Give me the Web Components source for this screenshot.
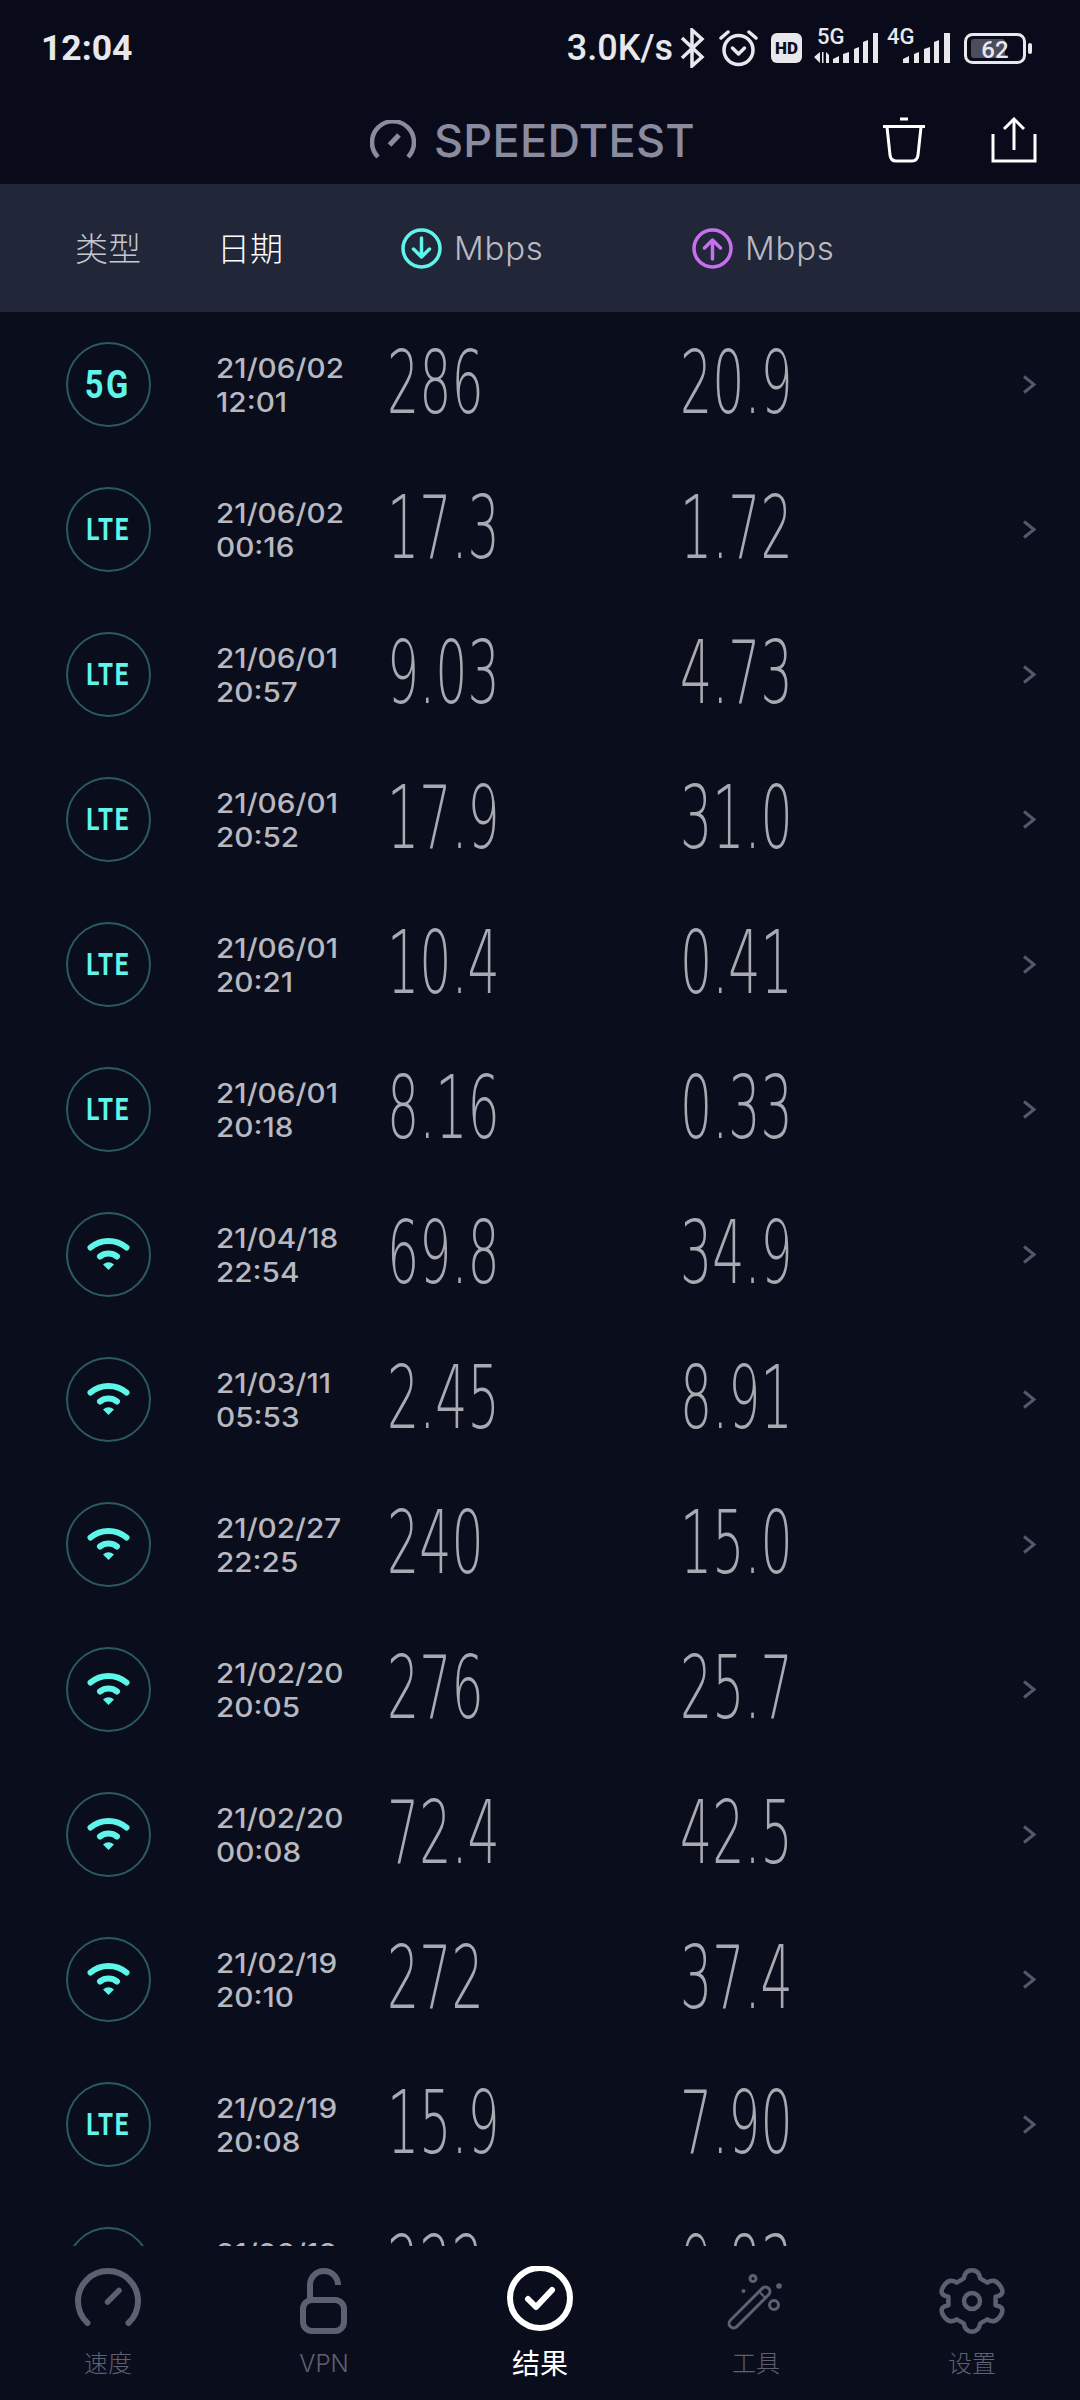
<!DOCTYPE html>
<html lang="zh">
<head>
<meta charset="utf-8">
<title>Speedtest</title>
<style>
  html, body { margin: 0; padding: 0; background: #0a0d1b; }
  body { width: 1080px; height: 2400px; overflow: hidden; font-family: "Inter", "Noto Sans CJK SC", sans-serif; }
</style>
</head>
<body>
<st-app>
  <st-status slot="status"></st-status>
  <st-title slot="title"></st-title>
  <st-head slot="head"></st-head>

  <st-row type="5g"><span slot="date">21/06/02</span><span slot="time">12:01</span><span slot="down">286</span><span slot="up">20.9</span></st-row>
  <st-row type="lte"><span slot="date">21/06/02</span><span slot="time">00:16</span><span slot="down">17.3</span><span slot="up">1.72</span></st-row>
  <st-row type="lte"><span slot="date">21/06/01</span><span slot="time">20:57</span><span slot="down">9.03</span><span slot="up">4.73</span></st-row>
  <st-row type="lte"><span slot="date">21/06/01</span><span slot="time">20:52</span><span slot="down">17.9</span><span slot="up">31.0</span></st-row>
  <st-row type="lte"><span slot="date">21/06/01</span><span slot="time">20:21</span><span slot="down">10.4</span><span slot="up">0.41</span></st-row>
  <st-row type="lte"><span slot="date">21/06/01</span><span slot="time">20:18</span><span slot="down">8.16</span><span slot="up">0.33</span></st-row>
  <st-row type="wifi"><span slot="date">21/04/18</span><span slot="time">22:54</span><span slot="down">69.8</span><span slot="up">34.9</span></st-row>
  <st-row type="wifi"><span slot="date">21/03/11</span><span slot="time">05:53</span><span slot="down">2.45</span><span slot="up">8.91</span></st-row>
  <st-row type="wifi"><span slot="date">21/02/27</span><span slot="time">22:25</span><span slot="down">240</span><span slot="up">15.0</span></st-row>
  <st-row type="wifi"><span slot="date">21/02/20</span><span slot="time">20:05</span><span slot="down">276</span><span slot="up">25.7</span></st-row>
  <st-row type="wifi"><span slot="date">21/02/20</span><span slot="time">00:08</span><span slot="down">72.4</span><span slot="up">42.5</span></st-row>
  <st-row type="wifi"><span slot="date">21/02/19</span><span slot="time">20:10</span><span slot="down">272</span><span slot="up">37.4</span></st-row>
  <st-row type="lte"><span slot="date">21/02/19</span><span slot="time">20:08</span><span slot="down">15.9</span><span slot="up">7.90</span></st-row>
  <st-row type="lte"><span slot="date">21/02/19</span><span slot="time">20:06</span><span slot="down">222</span><span slot="up">9.83</span></st-row>

  <st-tabs slot="tabs">
    <st-tab>
      <svg slot="icon" width="70" height="70" viewBox="0 0 70 70" fill="none" stroke="#5e6072" stroke-width="6" stroke-linecap="round"><path d="M14.500 57A30 30 0 1 1 55.500 57"/><path d="M34.500 36L46 24.500" stroke-width="5.500"/></svg>
      速度
    </st-tab>
    <st-tab>
      <svg slot="icon" width="70" height="70" viewBox="0 0 70 70" fill="none" stroke="#5e6072" stroke-width="6"><rect x="14" y="34" width="41" height="31" rx="9"/><path d="M21 34V19A14 14 0 0 1 49 19"/></svg>
      VPN
    </st-tab>
    <st-tab active>
      <svg slot="icon" width="70" height="70" viewBox="0 0 70 70" fill="none" stroke="#fff" stroke-linecap="round" stroke-linejoin="round"><circle cx="35" cy="32" r="30" stroke-width="6"/><path d="M23 33L31 41L47 24" stroke-width="6"/></svg>
      结果
    </st-tab>
    <st-tab>
      <svg slot="icon" width="70" height="70" viewBox="0 0 70 70" fill="none" stroke="#5e6072" stroke-width="3"><rect x="-4.500" y="-27" width="9" height="54" rx="4.500" transform="translate(28.500 41.500) rotate(45)"/><path d="M38 25.500L44 31.500" stroke-width="2"/><circle cx="32" cy="12.500" r="3"/><circle cx="53" cy="39" r="4.500"/><circle cx="58" cy="20" r="2.800" fill="#5e6072" stroke="none"/><circle cx="22.500" cy="25" r="2" fill="#5e6072" stroke="none"/></svg>
      工具
    </st-tab>
    <st-tab>
      <svg slot="icon" width="70" height="70" viewBox="0 0 70 70" fill="none" stroke="#5e6072" stroke-width="4.500" stroke-linejoin="round"><path d="M26.800 12.400Q28.100 4.300 35 4.300Q41.900 4.300 43.200 12.400L50.400 16.600Q58 11.500 63.500 20.250Q69 29 58.600 30.800V39.200Q69 41 63.500 49.750Q58 58.500 50.400 53.400L43.200 57.400Q41.900 65.700 35 65.700Q28.100 65.700 26.800 57.400L19.600 53.400Q12 58.500 6.500 49.750Q1 41 11.400 39.200V30.800Q1 29 6.500 20.250Q12 11.500 19.600 16.600Z"/><circle cx="35" cy="35" r="8"/></svg>
      设置
    </st-tab>
  </st-tabs>
</st-app>

<script>
class StApp extends HTMLElement {
  constructor() {
    super();
    this.attachShadow({ mode: "open" });
    this.shadowRoot.innerHTML = `
      <style>
        :host { display: flex; flex-direction: column; width: 1080px; height: 2400px; background: #0a0d1b; }
        .top { flex: none; background: #090b1a; }
        .list { flex: 1; min-height: 0; overflow: hidden; }
        .tabs { flex: none; }
      </style>
      <div class="top">
        <slot name="status"></slot>
        <slot name="title"></slot>
        <slot name="head"></slot>
      </div>
      <div class="list"><slot></slot></div>
      <div class="tabs"><slot name="tabs"></slot></div>
    `;
  }
}

class StStatus extends HTMLElement {
  constructor() {
    super();
    this.attachShadow({ mode: "open" });
    this.shadowRoot.innerHTML = `
      <style>
        :host { display: flex; align-items: center; height: 96px; padding: 0 48px 0 41px; box-sizing: border-box;
                color: #e8e8ec; font: 500 36px "Roboto", sans-serif; }
        .time { flex: 1; font-weight: 700; font-size: 35.500px; }
        .icons { display: flex; align-items: center; }
        svg { display: block; }
        svg text { font-family: "Roboto", sans-serif; font-weight: 500; fill: #e8e8ec; }
        .sig { margin-bottom: 12px; }
      </style>
      <span class="time">12:04</span>
      <div class="icons">
        <span>3.0K/s</span>
        <svg style="margin-left:7px" width="25" height="40" viewBox="0 0 25 40" fill="none" stroke="#e8e8ec" stroke-width="3.500"><path d="M2 10L22 29L12 38V2L22 11L2 30"/></svg>
        <svg style="margin-left:14px" width="39" height="38" viewBox="0 0 39 38" fill="none" stroke="#e8e8ec" stroke-width="3.500" stroke-linecap="round" stroke-linejoin="round"><circle cx="19.500" cy="21" r="14.500"/><path d="M13.500 19L19.500 25L25.500 19"/><path d="M2 9L9 3M37 9L30 3"/></svg>
        <svg style="margin-left:13px" width="31" height="30" viewBox="0 0 31 30"><rect width="31" height="30" rx="6" fill="#e8e8ec"/><text x="15.500" y="21" text-anchor="middle" font-size="17" style="fill:#0a0d1b;font-weight:900">HD</text></svg>
        <svg class="sig" style="margin-left:11px" width="66" height="42" viewBox="0 -6 66 42" fill="#e8e8ec"><text x="4" y="17" font-size="22">5G</text><path d="M1 30L7 25V36ZM9 25H10.500V36H9ZM13 25L16 28V36H13Z"/><path d="M20 36V32L26 29V36ZM30 36V27L36 25V36ZM41 36V22L46 20V36ZM50 36V15L55 13V36ZM60 36V6H65V36Z"/></svg>
        <svg class="sig" style="margin-left:8px" width="63" height="42" viewBox="0 -6 63 42" fill="#e8e8ec"><text x="0" y="17" font-size="22">4G</text><path d="M16 36V32L22 29V36ZM27 36V27L32 25V36ZM37 36V22L43 20V36ZM47 36V15L52 13V36ZM57 36V6H63V36Z"/></svg>
        <svg style="margin-left:14px" width="68" height="31" viewBox="0 0 68 31"><rect x="1.500" y="1.500" width="59" height="28" rx="7" fill="none" stroke="#e8e8ec" stroke-width="3"/><rect x="7" y="6" width="34" height="19" rx="3" fill="#4b4c5c"/><text x="31" y="25" text-anchor="middle" font-size="24">62</text><rect x="64" y="10" width="4" height="11" rx="2" fill="#e8e8ec"/></svg>
      </div>
    `;
  }
}

class StTitle extends HTMLElement {
  constructor() {
    super();
    this.attachShadow({ mode: "open" });
    this.shadowRoot.innerHTML = `
      <style>
        :host { display: flex; align-items: center; height: 88px; padding: 0 43px 0 370px; box-sizing: border-box; }
        .name { margin-left: 18px; color: #8a8b9f; font: 500 45px "Inter", sans-serif; letter-spacing: .3px; }
        .acts { margin-left: auto; display: flex; gap: 65px; }
        svg { display: block; }
      </style>
      <svg width="46" height="40" viewBox="0 0 46 40" fill="none" stroke="#8a8b9f" stroke-width="4.500"><path d="M8 37A21 21 0 1 1 38 37"/><path d="M19.500 25L29 15" stroke-width="5"/></svg>
      <span class="name">SPEEDTEST</span>
      <div class="acts">
        <svg width="44" height="46" viewBox="0 0 44 46" fill="none" stroke="#fff" stroke-width="3"><path d="M1 9.500H43"/><path d="M18 2H26" stroke-width="3"/><path d="M5 10L8 38C8.500 42 10 44 14 44H30C34 44 35.500 42 36 38L39 10"/></svg>
        <svg width="46" height="46" viewBox="0 0 46 46" fill="none" stroke="#fff" stroke-width="3"><path d="M2 17V44H44V17"/><path d="M23 33V3"/><path d="M13 12L23 2L33 12"/></svg>
      </div>
    `;
  }
}

class StHead extends HTMLElement {
  constructor() {
    super();
    this.attachShadow({ mode: "open" });
    this.shadowRoot.innerHTML = `
      <style>
        :host { display: grid; grid-template-columns: 217px 184px 291px 1fr; align-items: center; height: 128px;
                background: #212638; color: #b9bac2; font: 300 33px "Inter", "Noto Sans CJK SC", sans-serif; letter-spacing: .8px; }
        .type { padding-left: 75px; padding-bottom: 2px; color: #c6c7ce; font-family: "Noto Sans CJK SC", sans-serif; font-weight: 300; letter-spacing: 0; }
        .date { padding-bottom: 2px; color: #fff; font-family: "Noto Sans CJK SC", sans-serif; font-weight: 300; letter-spacing: 0; }
        .rate { display: flex; align-items: center; gap: 12px; }
        svg { display: block; }
      </style>
      <span class="type">类型</span>
      <span class="date">日期</span>
      <span class="rate"><svg width="41" height="41" viewBox="0 0 41 41" fill="none" stroke="#5ef5ea" stroke-width="3.500" stroke-linecap="round" stroke-linejoin="round"><circle cx="20.500" cy="20.500" r="18.500"/><path d="M20.500 10V29M12.500 21L20.500 29L28.500 21"/></svg>Mbps</span>
      <span class="rate"><svg width="41" height="41" viewBox="0 0 41 41" fill="none" stroke="#c86ff0" stroke-width="3.500" stroke-linecap="round" stroke-linejoin="round"><circle cx="20.500" cy="20.500" r="18.500"/><path d="M20.500 31V12M12.500 20L20.500 12L28.500 20"/></svg>Mbps</span>
    `;
  }
}

const rowIcons = {
  wifi: `<svg width="85" height="85" viewBox="0 0 85 85" fill="none" stroke="#5ef5ea" stroke-width="6" stroke-linecap="round"><path d="M24.500 35.500A28 28 0 0 1 60.500 35.500"/><path d="M34 44.500A14 14 0 0 1 51 44.500"/><path d="M37 52.500Q42.500 48 48 52.500L42.500 58Z" fill="#5ef5ea" stroke="none"/></svg>`,
};

class StRow extends HTMLElement {
  constructor() {
    super();
    this.attachShadow({ mode: "open" });
    const type = this.getAttribute("type");
    const badge = rowIcons[type] || `<span class="tag t-${type}">${type.toUpperCase()}</span>`;
    this.shadowRoot.innerHTML = `
      <style>
        :host { display: grid; grid-template-columns: 216px 171px 293px 1fr 58px; align-items: center; height: 145px; }
        .badge { margin-left: 65.500px; width: 85px; height: 85px; box-sizing: border-box; display: flex; align-items: center; justify-content: center; position: relative; }
        .ring { position: absolute; inset: 0; border: 2px solid #2b5a62; border-radius: 50%; }
        .tag { color: #5ef5ea; font-family: "Roboto", sans-serif; font-weight: 700; display: inline-block; }
        .t-5g { font-size: 38px; letter-spacing: 3px; transform: scaleX(.86); }
        .t-lte { font-size: 31px; letter-spacing: 2px; transform: scaleX(.78); }
        .when { padding-top: 2px; display: flex; flex-direction: column; color: #b8b8c0; font: 500 27px/34px "Inter", sans-serif; transform: scaleX(1.1); transform-origin: 0 50%; }
        .num { display: block; color: #a9a9b2; font: 200 88px/1 "DejaVu Sans", sans-serif; transform: scaleX(.575); transform-origin: 0 50%; white-space: nowrap; margin-top: -3px; }
        .go { display: block; }
        svg { display: block; }
      </style>
      <div class="badge"><div class="ring"></div>${badge}</div>
      <div class="when"><slot name="date"></slot><slot name="time"></slot></div>
      <span class="num"><slot name="down"></slot></span>
      <span class="num"><slot name="up"></slot></span>
      <svg class="go" width="15" height="22" viewBox="0 0 15 22" fill="none" stroke="#55576a" stroke-width="3"><path d="M2 2.500L12 10.500L2 18.500"/></svg>
    `;
  }
}

class StTabs extends HTMLElement {
  constructor() {
    super();
    this.attachShadow({ mode: "open" });
    this.shadowRoot.innerHTML = `
      <style>
        :host { display: grid; grid-template-columns: repeat(5, 216px); height: 154px; background: #0a0d1b; }
      </style>
      <slot></slot>
    `;
  }
}

class StTab extends HTMLElement {
  constructor() {
    super();
    this.attachShadow({ mode: "open" });
    this.shadowRoot.innerHTML = `
      <style>
        :host { display: flex; flex-direction: column; align-items: center; padding-top: 20px; box-sizing: border-box;
                color: #5e6072; font: 300 24px/30px "Inter", "Noto Sans CJK SC", sans-serif; }
        :host([active]) { color: #fff; font-size: 28px; font-weight: 400; }
        .icon { height: 70px; margin-bottom: 13px; }
      </style>
      <div class="icon"><slot name="icon"></slot></div>
      <slot></slot>
    `;
  }
}

customElements.define("st-app", StApp);
customElements.define("st-status", StStatus);
customElements.define("st-title", StTitle);
customElements.define("st-head", StHead);
customElements.define("st-row", StRow);
customElements.define("st-tabs", StTabs);
customElements.define("st-tab", StTab);
</script>
</body>
</html>
